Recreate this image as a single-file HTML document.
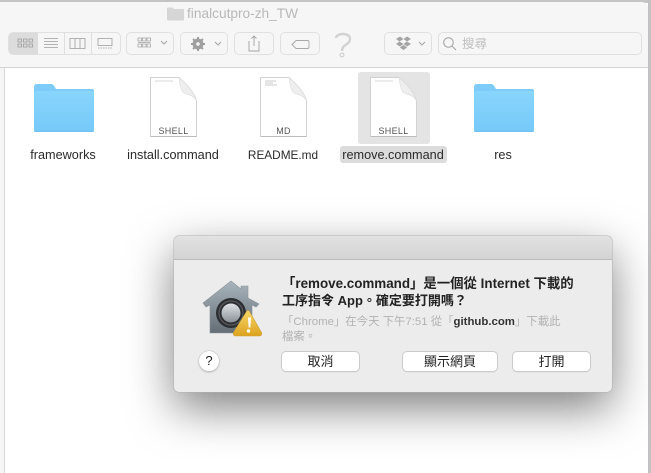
<!DOCTYPE html>
<html lang="zh-TW"><head><meta charset="utf-8"><title>Finder</title>
<style>
html,body{margin:0;padding:0;width:651px;height:473px;overflow:hidden;background:#fff}
body{position:relative;font-family:"Liberation Sans","Noto Sans CJK TC",sans-serif;color:#222;filter:blur(.3px)}
div,span.a,svg{position:absolute}
.t{white-space:nowrap}
.btn{top:32px;height:21px;border:1px solid #e0e0e0;border-radius:5px;background:#f6f6f6;box-sizing:content-box}
.lab{top:147px;font-size:12.700px;line-height:16px;text-align:center;white-space:nowrap;color:#2a2a2a}
.db{top:352px;height:19px;background:#fff;border-radius:4px;box-shadow:0 0 0 1px #cbcbcb,0 1px 1px #bbb;font-size:13px;line-height:19px;text-align:center;color:#222}
.ft{font-size:9px;letter-spacing:.3px;color:#555;text-align:center;width:47px}
</style></head><body>
<div style="left:0;top:0;width:651px;height:3px;background:#c4c4c4"></div>
<div style="left:648px;top:0;width:3px;height:473px;background:#c2c2c2"></div>
<div style="left:0;top:2px;width:648px;height:66px;background:#f6f6f6;border-top-right-radius:6px;border-bottom:1px solid #d4d4d4;box-sizing:border-box"></div>
<div style="left:0;top:68px;width:4px;height:405px;background:#f5f5f5;border-right:1px solid #d8d8d8"></div>

<svg style="left:167px;top:7px" width="17" height="14" viewBox="0 0 17 14"><path d="M0 2q0-1.500 1-1.500h4.500l1.500 1.500h9q1 0 1 1v9.500q0 1-1 1h-15q-1 0-1-1z" fill="#d6d6d6"/></svg>
<div class="t" style="left:187px;top:6px;font-size:13.700px;line-height:16px;color:#b8b8b8">finalcutpro-zh_TW</div>

<!-- view group -->
<div class="btn" style="left:8px;width:111px"></div>
<div style="left:9px;top:33px;width:29px;height:21px;background:#dcdcdc;border-radius:4px 0 0 4px"></div>
<div style="left:64px;top:33px;width:1px;height:21px;background:#dedede"></div>
<div style="left:91px;top:33px;width:1px;height:21px;background:#dedede"></div>
<svg style="left:8px;top:32px" width="112" height="23" fill="none" stroke="#9c9c9c" stroke-width=".8">
<path d="M10 7h3.500v3H10zM15.500 7H19v3h-3.500zM21 7h3.500v3H21zM10 12h3.500v3H10zM15.500 12H19v3h-3.500zM21 12h3.500v3H21z"/>
<path d="M36 6.500h14M36 9.500h14M36 12.500h14M36 15.500h14"/>
<path d="M62 6.500h15v10H62zM67 6.500v10M72 6.500v10"/>
<path d="M90 6.500h14v7H90z"/><path d="M90 16h14" stroke-dasharray="1.500 1"/>
</svg>
<!-- group -->
<div class="btn" style="left:126px;width:46px"></div>
<svg style="left:126px;top:32px" width="48" height="23" fill="none" stroke="#a6a6a6" stroke-width=".8">
<path d="M12 6h3.500v3H12zM16.500 6H20v3h-3.500zM21 6h3.500v3H21zM12 12h3.500v3H12zM16.500 12H20v3h-3.500zM21 12h3.500v3H21zM12 10.500h12.500"/>
<path d="M35 9l3 3 3-3" stroke-width="1"/></svg>
<!-- gear -->
<div class="btn" style="left:180px;width:46px"></div>
<svg style="left:180px;top:32px" width="48" height="23" fill="none">
<circle cx="18" cy="12" r="4" stroke="#9f9f9f" stroke-width="3"/>
<path d="M18 5v14M11 12h14M13 7l10 10M23 7L13 17" stroke="#9f9f9f" stroke-width="2"/>
<circle cx="18" cy="12" r="1.800" fill="#f6f6f6"/>
<path d="M35 10l3 3 3-3" stroke="#a6a6a6"/></svg>
<!-- share -->
<div class="btn" style="left:234px;width:38px"></div>
<svg style="left:234px;top:32px" width="40" height="23" fill="none" stroke="#a2a2a2" stroke-width=".9">
<path d="M15.500 9.500H15v9.500h10V9.500h-.5M20 14V4M17.500 6.500L20 4l2.500 2.500"/></svg>
<!-- tag -->
<div class="btn" style="left:280px;width:38px"></div>
<svg style="left:280px;top:32px" width="40" height="23" fill="none" stroke="#a8a8a8" stroke-width=".9">
<path d="M12 12.500l4-4h11.500q1.500 0 1.500 1.500v5q0 1.500-1.500 1.500H16z"/></svg>
<!-- help icon -->
<svg style="left:330px;top:26px" width="24" height="34" fill="none" stroke="#d2d2d2">
<path d="M6 12C6 7 20 6 20 13C20 19 12 18 12 25" stroke-width="2.400"/><circle cx="12" cy="29" r="1.900" stroke-width="1.300"/></svg>
<!-- dropbox -->
<div class="btn" style="left:384px;width:46px"></div>
<svg style="left:384px;top:32px" width="48" height="23" fill="#a4a4a4">
<path d="M12 7l4-2.500 3.500 2.500-4 2.500zM19.500 7l3.500-2.500L27 7l-4 2.500zM12 12l4 2.500 3.500-2.500-4-2.500zM19.500 12l3.500 2.500 4-2.500-4-2.500zM15.800 15.500l3.700-2.500 3.700 2.500-3.700 2.500z"/>
<path d="M35 10l3 3 3-3" fill="none" stroke="#a6a6a6"/></svg>
<!-- search -->
<div class="btn" style="left:438px;width:202px"></div>
<svg style="left:438px;top:32px" width="24" height="23" fill="none" stroke="#a2a2a2" stroke-width="1"><circle cx="10.500" cy="10.500" r="4.800"/><path d="M14 14l4 4"/></svg>
<div class="t" style="left:462px;top:36px;font-size:12.500px;line-height:16px;color:#c0c0c0">搜尋</div>

<!-- items -->
<svg width="0" height="0" style="left:0;top:0"><defs>
<linearGradient id="fb" x1="0" y1="0" x2="0" y2="1"><stop offset="0" stop-color="#88d5fd"/><stop offset="1" stop-color="#76c9f8"/></linearGradient>
<g id="folder"><path d="M0 3q0-3 3-3h14q2 0 3.500 2.500L22 5h36q2 0 2 2v12H0z" fill="#7dcbf9"/><path d="M0 9q0-2 2-2h56q2 0 2 2v37q0 2-2 2H2q-2 0-2-2z" fill="url(#fb)"/><path d="M0 46.500h60q0 1.500-2 1.500H2q-2 0-2-1.500z" fill="#72c2f1"/></g>
<g id="file"><path d="M.5.500H29C34 5 44 14 46.500 24V59.500H.5z" fill="#fff" stroke="#d2d2d2"/><path d="M29 .5C30 8 31 14 34 16C38 18 44 18 46.500 24C44 14 34 5 29 .5z" fill="#eeeeee" stroke="#dcdcdc" stroke-width=".6"/><path d="M1 59.500h45.500" stroke="#bcbcbc"/></g>
</defs></svg>

<svg style="left:34px;top:84px" width="60" height="48"><use href="#folder"/></svg>
<div class="lab" style="left:13px;width:100px">frameworks</div>

<svg style="left:150px;top:77px" width="47" height="60"><use href="#file"/><path d="M5 4h18" stroke="#ccc" stroke-width=".7"/></svg>
<div class="ft" style="left:150px;top:126px;line-height:10px">SHELL</div>
<div class="lab" style="left:113px;width:120px">install.command</div>

<svg style="left:260px;top:77px" width="47" height="60"><use href="#file"/><path d="M5 4h11M5 6h8M5 8h12" stroke="#bbb" stroke-width=".7"/></svg>
<div class="ft" style="left:260px;top:126px;line-height:10px">MD</div>
<div class="lab" style="left:223px;width:120px;font-size:11.800px">README.md</div>

<div style="left:358px;top:72px;width:72px;height:72px;background:#e4e4e4;border-radius:3px"></div>
<svg style="left:370px;top:77px" width="47" height="60"><use href="#file"/><path d="M5 4h18" stroke="#ccc" stroke-width=".7"/></svg>
<div class="ft" style="left:370px;top:126px;line-height:10px">SHELL</div>
<div style="left:340px;top:146px;width:107px;height:17px;background:#dcdcdc;border-radius:3px"></div>
<div class="lab" style="left:333px;width:120px">remove.command</div>

<svg style="left:474px;top:84px" width="60" height="48"><use href="#folder"/></svg>
<div class="lab" style="left:453px;width:100px">res</div>

<!-- dialog -->
<div style="left:174px;top:236px;width:438px;height:156px;background:#ececec;border-radius:5px;box-shadow:0 0 0 .5px #b0b0b0,0 16px 45px rgba(0,0,0,.5);overflow:hidden">
<div style="left:0;top:0;width:438px;height:23px;background:linear-gradient(#e2e2e2,#d3d3d3);border-bottom:1px solid #bdbdbd"></div>
</div>

<svg style="left:202px;top:280px" width="60" height="58" viewBox="0 0 60 58">
<defs><linearGradient id="h" x1="0" y1="0" x2="0" y2="1"><stop offset="0" stop-color="#a9b5bd"/><stop offset="1" stop-color="#646d75"/></linearGradient>
<linearGradient id="k" x1="0" y1="0" x2="0" y2="1"><stop offset="0" stop-color="#dfe3e6"/><stop offset="1" stop-color="#8a9198"/></linearGradient>
<linearGradient id="w" x1="0" y1="0" x2="0" y2="1"><stop offset="0" stop-color="#f6d668"/><stop offset="1" stop-color="#dca21f"/></linearGradient></defs>
<path d="M1 23L29 1l10 8V6h7v12l11 6-3 3-4-2v28H8V25l-4 2z" fill="url(#h)" stroke="#8b949c" stroke-width=".6"/>
<circle cx="29" cy="33" r="15" fill="#2c2e31"/>
<circle cx="29" cy="33" r="12" fill="none" stroke="#55585c" stroke-width="1.300"/>
<circle cx="29" cy="33" r="9.500" fill="url(#k)"/>
<path d="M45.500 31.500q1.500-2 3 0l12 21q1 3-2 3.500h-24q-3-.5-2-3.500z" transform="translate(-1 0)" fill="url(#w)" stroke="#cda238" stroke-width=".6"/>
<path d="M46 37.500h3l-.6 10h-1.800z" fill="#fff"/><circle cx="46.500" cy="51" r="1.700" fill="#fff"/>
</svg>

<div style="left:199px;top:351px;width:20px;height:20px;border-radius:50%;background:#fff;box-shadow:0 0 0 .5px #c4c4c4,0 1px 2px #aaa;font-size:13px;line-height:20px;text-align:center;color:#222">?</div>

<div class="t" style="left:282px;top:276px;font-size:13.400px;line-height:16px;font-weight:700;color:#222">「remove.command」是一個從 Internet 下載的</div>
<div class="t" style="left:282px;top:293px;font-size:13px;line-height:16px;font-weight:700;color:#222">工序指令 App。確定要打開嗎？</div>
<div class="t" style="left:282px;top:315px;font-size:11.400px;line-height:15px;color:#b2b2b2">「Chrome」在今天 下午7:51 從「<b style="color:#333">github.com</b>」下載此</div>
<div class="t" style="left:282px;top:330px;font-size:11.400px;line-height:15px;color:#b2b2b2">檔案。</div>

<div class="db" style="left:282px;width:77px">取消</div>
<div class="db" style="left:403px;width:94px">顯示網頁</div>
<div class="db" style="left:513px;width:77px">打開</div>
</body></html>
